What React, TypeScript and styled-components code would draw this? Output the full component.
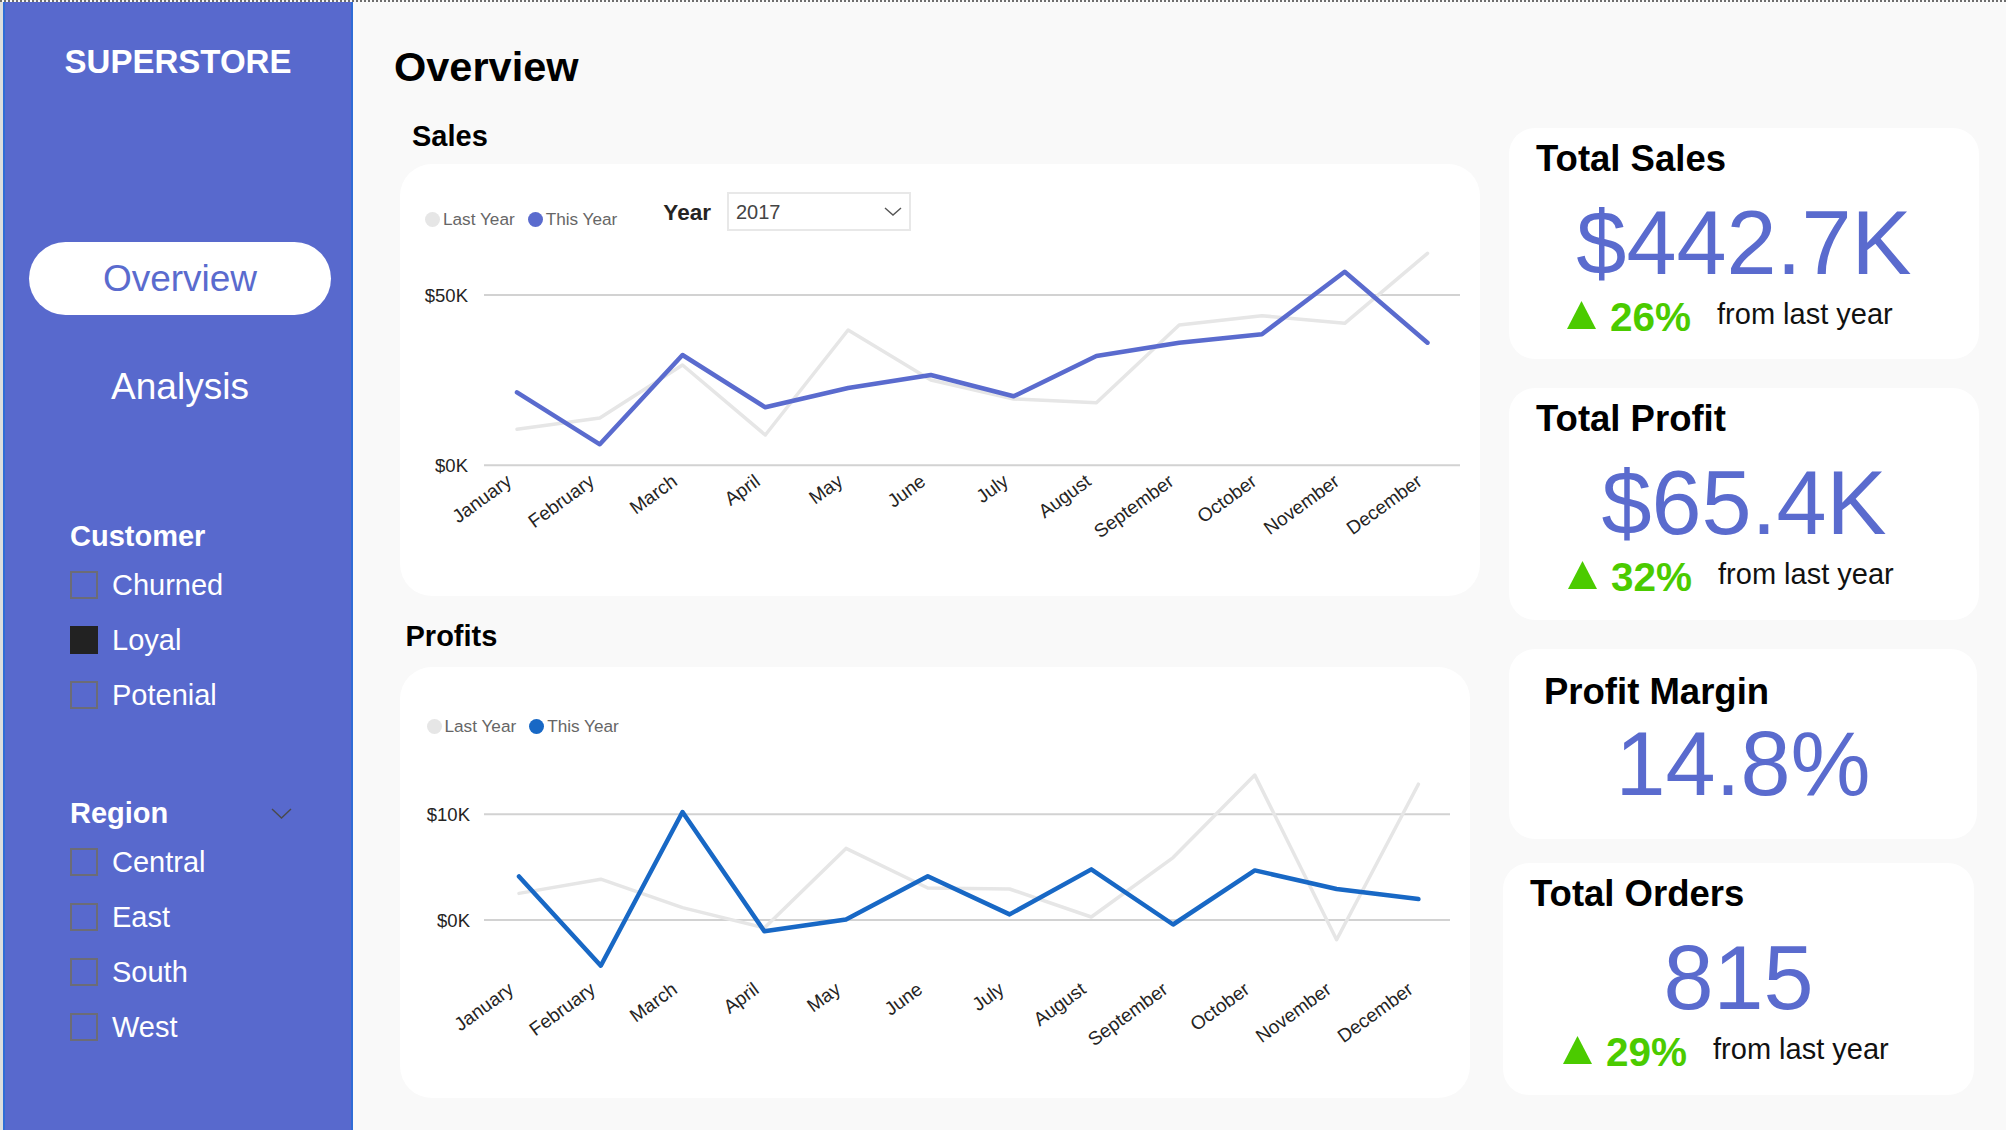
import React from "react";
import styled, { createGlobalStyle } from "styled-components";

const BLUE = "#5a6bce";
const PROFIT_BLUE = "#1868c5";
const GREEN = "#4bcb00";
const GRAY_LINE = "#e6e6e6";

const GlobalStyle = createGlobalStyle`
  html, body { margin: 0; padding: 0; background: #f9f9f9; }
  body { font-family: "Liberation Sans", Arial, sans-serif; }
  #root { width: 2006px; height: 1130px; }
`;

const Page = styled.div`
  display: flex;
  width: 2006px;
  height: 1130px;
  box-sizing: border-box;
  border-top: 2px dotted #6e6e6e;
  background: #f9f9f9;
  overflow: hidden;
`;

/* ---------- Sidebar ---------- */

const Sidebar = styled.aside`
  flex: none;
  display: flex;
  flex-direction: column;
  width: 350px;
  margin-left: 3px;
  box-sizing: border-box;
  padding-top: 43px;
  background: #5869cd;
  border-left: 2px solid #2f6cd6;
  border-right: 2px solid #2f6cd6;
  box-shadow: -3px 0 0 #dddddd;
`;

const Brand = styled.div`
  font-size: 33px;
  line-height: 1;
  font-weight: 700;
  color: #ffffff;
  text-align: center;
`;

const NavPill = styled.div<{ $active?: boolean; $mt: number }>`
  display: flex;
  align-items: center;
  justify-content: center;
  width: 302px;
  height: 73px;
  margin: ${(p) => p.$mt}px 0 0 24px;
  border-radius: 37px;
  background: ${(p) => (p.$active ? "#ffffff" : "transparent")};
  color: ${(p) => (p.$active ? BLUE : "#ffffff")};
  font-size: 37px;
  line-height: 1;
`;

const FilterGroup = styled.div<{ $mt: number }>`
  display: flex;
  flex-direction: column;
  margin: ${(p) => p.$mt}px 0 0 65px;
`;

const FilterHeader = styled.div`
  display: flex;
  align-items: center;
  justify-content: space-between;
  width: 222px;
  font-size: 29px;
  line-height: 1;
  font-weight: 700;
  color: #ffffff;
`;

const FilterList = styled.div`
  display: flex;
  flex-direction: column;
  margin-top: 6.5px;
`;

const FilterRow = styled.div`
  display: flex;
  align-items: center;
  height: 55px;
`;

const Checkbox = styled.span<{ $checked?: boolean }>`
  flex: none;
  width: 28px;
  height: 28px;
  box-sizing: border-box;
  border: 2px solid ${(p) => (p.$checked ? "#222222" : "#6c6c76")};
  background: ${(p) => (p.$checked ? "#222222" : "transparent")};
`;

const CheckLabel = styled.span`
  margin-left: 14px;
  font-size: 29px;
  line-height: 1;
  color: #ffffff;
`;

/* ---------- Main ---------- */

const Main = styled.main`
  flex: 1;
  min-width: 0;
  display: flex;
  flex-direction: column;
  padding: 45px 0 0 41px;
`;

const PageTitle = styled.h1`
  margin: 0;
  font-size: 41.5px;
  line-height: 40px;
  font-weight: 700;
  color: #000000;
`;

const Body = styled.div`
  display: flex;
  margin-top: 35px;
`;

const ChartsCol = styled.div`
  display: flex;
  flex-direction: column;
  width: 1080px;
  margin-left: 6px;
`;

const SectionTitle = styled.h2<{ $indent: number; $mt: number }>`
  margin: ${(p) => p.$mt}px 0 0 ${(p) => p.$indent}px;
  font-size: 29px;
  line-height: 1;
  font-weight: 700;
  color: #000000;
`;

const ChartCard = styled.section<{ $w: number; $h: number; $mt: number }>`
  display: flex;
  flex-direction: column;
  box-sizing: border-box;
  width: ${(p) => p.$w}px;
  height: ${(p) => p.$h}px;
  margin-top: ${(p) => p.$mt}px;
  padding-top: 28px;
  background: #ffffff;
  border-radius: 32px;
`;

const CardHeader = styled.div<{ $h: number; $pl: number }>`
  display: flex;
  align-items: flex-start;
  height: ${(p) => p.$h}px;
  padding-left: ${(p) => p.$pl}px;
`;

const Legend = styled.div<{ $mt: number }>`
  display: flex;
  align-items: center;
  gap: 13px;
  margin-top: ${(p) => p.$mt}px;
`;

const LegendItem = styled.div`
  display: flex;
  align-items: center;
  gap: 3px;
  font-size: 17.2px;
  line-height: 17px;
  color: #666666;
`;

const LegendDot = styled.span<{ $color: string }>`
  width: 15px;
  height: 15px;
  border-radius: 50%;
  background: ${(p) => p.$color};
`;

const YearLabel = styled.div`
  margin: 10px 0 0 46px;
  font-size: 22.5px;
  line-height: 1;
  font-weight: 700;
  color: #252423;
`;

const YearSelect = styled.div`
  display: flex;
  align-items: center;
  justify-content: space-between;
  width: 184px;
  height: 39px;
  margin-left: 16.5px;
  box-sizing: border-box;
  padding: 0 7px 0 6.5px;
  border: 2px solid #e8e8e8;
  font-size: 20px;
  line-height: 1;
  color: #444444;
`;

const ChartSvg = styled.svg`
  display: block;
  font-family: "Liberation Sans", Arial, sans-serif;
`;

/* ---------- KPI cards ---------- */

const KpiCol = styled.div`
  display: flex;
  flex-direction: column;
  margin-left: 23px;
  padding-top: 6px;
`;

const KpiCard = styled.div<{ $ml: number; $w: number; $h: number; $mt: number }>`
  display: flex;
  flex-direction: column;
  box-sizing: border-box;
  width: ${(p) => p.$w}px;
  height: ${(p) => p.$h}px;
  margin: ${(p) => p.$mt}px 0 0 ${(p) => p.$ml}px;
  background: #ffffff;
  border-radius: 26px;
`;

const KpiTitle = styled.div<{ $top: number; $indent: number }>`
  margin: ${(p) => p.$top}px 0 0 ${(p) => p.$indent}px;
  font-size: 36.5px;
  line-height: 1;
  font-weight: 700;
  color: #000000;
`;

const KpiValue = styled.div<{ $gap: number }>`
  margin-top: ${(p) => p.$gap}px;
  font-size: 90px;
  line-height: 1;
  text-align: center;
  color: ${BLUE};
`;

const DeltaRow = styled.div<{ $pl: number }>`
  display: flex;
  align-items: center;
  height: 40px;
  margin-top: 6.5px;
  padding-left: ${(p) => p.$pl}px;
`;

const DeltaPct = styled.span`
  margin: 6px 0 0 14px;
  font-size: 40.5px;
  line-height: 1;
  font-weight: 700;
  color: ${GREEN};
`;

const DeltaText = styled.span`
  margin-left: 26px;
  font-size: 29px;
  line-height: 1;
  color: #111111;
`;

/* ---------- Data ---------- */

const MONTHS = [
  "January", "February", "March", "April", "May", "June",
  "July", "August", "September", "October", "November", "December",
];

type ChartConfig = {
  width: number;
  height: number;
  grid: { label: string; y: number }[];
  gridX1: number;
  gridX2: number;
  labelX: number;
  x0: number;
  step: number;
  thisYear: number[];
  lastYear: number[];
  monthY: number;
  color: string;
};

const salesChart: ChartConfig = {
  width: 1080,
  height: 330,
  grid: [
    { label: "$50K", y: 61 },
    { label: "$0K", y: 231.3 },
  ],
  gridX1: 84,
  gridX2: 1060,
  labelX: 68,
  x0: 117,
  step: 82.77,
  thisYear: [158.3, 210.3, 121, 173.3, 154, 141, 162.3, 122, 108.7, 100.3, 37.7, 108.7],
  lastYear: [195.3, 184, 131, 201, 96, 146, 165, 168.7, 91, 81.7, 89.3, 19.3],
  monthY: 250,
  color: BLUE,
};

const profitChart: ChartConfig = {
  width: 1070,
  height: 300,
  grid: [
    { label: "$10K", y: 57.3 },
    { label: "$0K", y: 163 },
  ],
  gridX1: 84,
  gridX2: 1050,
  labelX: 70,
  x0: 119,
  step: 81.76,
  thisYear: [119.5, 208.7, 55, 174.2, 162.4, 119.2, 157.4, 112.4, 167.5, 113.4, 132, 142.1],
  lastYear: [136.4, 122.2, 150.6, 170.9, 91.4, 131, 132, 160, 100.6, 18.1, 182.7, 27.2],
  monthY: 235,
  color: PROFIT_BLUE,
};

function LineChart({ c }: { c: ChartConfig }) {
  const xs = MONTHS.map((_, i) => c.x0 + i * c.step);
  const pts = (ys: number[]) => ys.map((y, i) => `${xs[i].toFixed(1)},${y}`).join(" ");
  return (
    <ChartSvg width={c.width} height={c.height} viewBox={`0 0 ${c.width} ${c.height}`}>
      {c.grid.map((g) => (
        <g key={g.label}>
          <line x1={c.gridX1} x2={c.gridX2} y1={g.y} y2={g.y} stroke="#d2d2d2" strokeWidth={2} />
          <text x={c.labelX} y={g.y + 6.6} textAnchor="end" fontSize={18.5} fill="#252423">
            {g.label}
          </text>
        </g>
      ))}
      <polyline
        points={pts(c.lastYear)}
        fill="none"
        stroke={GRAY_LINE}
        strokeWidth={3.5}
        strokeLinejoin="round"
        strokeLinecap="round"
      />
      <polyline
        points={pts(c.thisYear)}
        fill="none"
        stroke={c.color}
        strokeWidth={4.5}
        strokeLinejoin="round"
        strokeLinecap="round"
      />
      {MONTHS.map((m, i) => {
        const x = xs[i] - 4;
        return (
          <text
            key={m}
            x={x}
            y={c.monthY}
            transform={`rotate(-36 ${x} ${c.monthY})`}
            textAnchor="end"
            fontSize={19}
            fill="#252423"
          >
            {m}
          </text>
        );
      })}
    </ChartSvg>
  );
}

function ChartLegend({ color, mt }: { color: string; mt: number }) {
  return (
    <Legend $mt={mt}>
      <LegendItem>
        <LegendDot $color={GRAY_LINE} />
        Last Year
      </LegendItem>
      <LegendItem>
        <LegendDot $color={color} />
        This Year
      </LegendItem>
    </Legend>
  );
}

function Chevron({ w, h, color }: { w: number; h: number; color: string }) {
  return (
    <svg width={w} height={h} viewBox={`0 0 ${w} ${h}`}>
      <polyline
        points={`1,1 ${w / 2},${h - 1} ${w - 1},1`}
        fill="none"
        stroke={color}
        strokeWidth={1.4}
      />
    </svg>
  );
}

function UpTriangle() {
  return (
    <svg width={29} height={28} viewBox="0 0 29 28">
      <polygon points="14.5,0 29,28 0,28" fill={GREEN} />
    </svg>
  );
}

type Kpi = {
  title: string;
  value: string;
  delta?: string;
  ml: number;
  w: number;
  h: number;
  mt: number;
  titleTop: number;
  indent: number;
  deltaPl: number;
};

const kpis: Kpi[] = [
  { title: "Total Sales", value: "$442.7K", delta: "26%", ml: 6, w: 470, h: 231, mt: 0, titleTop: 12.6, indent: 27, deltaPl: 58 },
  { title: "Total Profit", value: "$65.4K", delta: "32%", ml: 6, w: 470, h: 232, mt: 29, titleTop: 12.6, indent: 27, deltaPl: 59 },
  { title: "Profit Margin", value: "14.8%", ml: 6, w: 468, h: 190, mt: 29, titleTop: 24.9, indent: 35, deltaPl: 0 },
  { title: "Total Orders", value: "815", delta: "29%", ml: 0, w: 471, h: 232, mt: 24, titleTop: 12.6, indent: 27, deltaPl: 60 },
];

const customerFilters = [
  { label: "Churned", checked: false },
  { label: "Loyal", checked: true },
  { label: "Potenial", checked: false },
];

const regionFilters = ["Central", "East", "South", "West"];

export default function App() {
  return (
    <>
      <GlobalStyle />
      <Page>
        <Sidebar>
          <Brand>SUPERSTORE</Brand>
          <NavPill $active $mt={164}>Overview</NavPill>
          <NavPill $mt={35}>Analysis</NavPill>

          <FilterGroup $mt={99}>
            <FilterHeader>Customer</FilterHeader>
            <FilterList>
              {customerFilters.map((f) => (
                <FilterRow key={f.label}>
                  <Checkbox $checked={f.checked} />
                  <CheckLabel>{f.label}</CheckLabel>
                </FilterRow>
              ))}
            </FilterList>
          </FilterGroup>

          <FilterGroup $mt={76.5}>
            <FilterHeader>
              Region
              <Chevron w={21} h={11} color="#4a4a4a" />
            </FilterHeader>
            <FilterList>
              {regionFilters.map((r) => (
                <FilterRow key={r}>
                  <Checkbox />
                  <CheckLabel>{r}</CheckLabel>
                </FilterRow>
              ))}
            </FilterList>
          </FilterGroup>
        </Sidebar>

        <Main>
          <PageTitle>Overview</PageTitle>
          <Body>
            <ChartsCol>
              <SectionTitle $indent={12} $mt={0}>Sales</SectionTitle>
              <ChartCard $w={1080} $h={432} $mt={13}>
                <CardHeader $h={42} $pl={25}>
                  <ChartLegend color={BLUE} mt={18.5} />
                  <YearLabel>Year</YearLabel>
                  <YearSelect>
                    <span>2017</span>
                    <Chevron w={18} h={9} color="#555555" />
                  </YearSelect>
                </CardHeader>
                <LineChart c={salesChart} />
              </ChartCard>

              <SectionTitle $indent={5.5} $mt={25.5}>Profits</SectionTitle>
              <ChartCard $w={1070} $h={431} $mt={16.5}>
                <CardHeader $h={62} $pl={26.5}>
                  <ChartLegend color={PROFIT_BLUE} mt={23} />
                </CardHeader>
                <LineChart c={profitChart} />
              </ChartCard>
            </ChartsCol>

            <KpiCol>
              {kpis.map((k) => (
                <KpiCard key={k.title} $ml={k.ml} $w={k.w} $h={k.h} $mt={k.mt}>
                  <KpiTitle $top={k.titleTop} $indent={k.indent}>{k.title}</KpiTitle>
                  <KpiValue $gap={70.1 - (k.titleTop + 36.5)}>{k.value}</KpiValue>
                  {k.delta && (
                    <DeltaRow $pl={k.deltaPl}>
                      <UpTriangle />
                      <DeltaPct>{k.delta}</DeltaPct>
                      <DeltaText>from last year</DeltaText>
                    </DeltaRow>
                  )}
                </KpiCard>
              ))}
            </KpiCol>
          </Body>
        </Main>
      </Page>
    </>
  );
}
